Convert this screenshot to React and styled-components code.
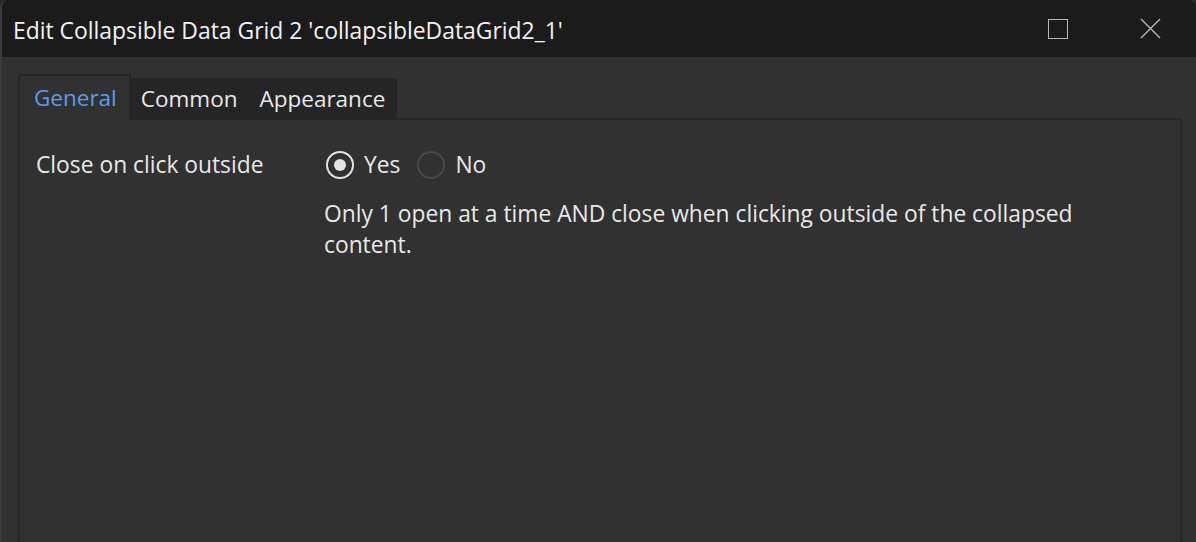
import React, { useState } from 'react';
import styled, { createGlobalStyle } from 'styled-components';

const GlobalStyle = createGlobalStyle`
  html, body {
    margin: 0;
    padding: 0;
    background: #2a2a2a;
    overflow: hidden;
  }
`;

const Window = styled.div`
  width: 1196px;
  height: 542px;
  box-sizing: border-box;
  display: flex;
  flex-direction: column;
  border-left: 2px solid #3c3c3c;
  border-radius: 8px 8px 0 0;
  overflow: hidden;
  font-family: 'Open Sans', 'Noto Sans', sans-serif;
  color: #e8e8e8;
`;

const TitleBar = styled.div`
  height: 57px;
  flex-shrink: 0;
  display: flex;
  align-items: center;
  background: #1b1b1b;
  padding-left: 11px;
`;

const Title = styled.div`
  flex: 1;
  font-size: 22.9px;
  color: #f2f2f2;
  padding-top: 4px;
`;

const WindowButton = styled.button`
  width: 92px;
  height: 57px;
  border: none;
  background: transparent;
  display: flex;
  align-items: center;
  justify-content: center;
  padding: 0;
  color: #b8b8b8;
`;

const Body = styled.div`
  flex: 1;
  display: flex;
  flex-direction: column;
  background: #313131;
  padding: 17px 14px 0 16px;
`;

const TabStrip = styled.div`
  display: flex;
  align-items: flex-end;
  position: relative;
  z-index: 1;
  margin-bottom: -2px;
`;

const Tab = styled.div`
  box-sizing: border-box;
  font-size: 22.5px;
  display: flex;
  align-items: center;
  ${(p) =>
    p.$active
      ? `
    height: 46px;
    padding: 0 12px 2px 14px;
    background: #313131;
    border: 2px solid #262626;
    border-bottom: none;
    color: #5e9be8;
  `
      : `
    height: 40px;
    margin-bottom: 2px;
    padding: 0 12px 0 10px;
    background: #252525;
    color: #e8e8e8;
  `}
`;

const Panel = styled.div`
  flex: 1;
  border: 2px solid #262626;
  border-bottom: none;
  padding: 29px 16px 0 16px;
`;

const Row = styled.div`
  display: grid;
  grid-template-columns: 290px 1fr;
  font-size: 22.8px;
`;

const Label = styled.div`
  line-height: 31px;
`;

const Options = styled.div`
  display: flex;
  flex-direction: column;
  gap: 18px;
`;

const RadioGroup = styled.div`
  display: flex;
  align-items: center;
  gap: 17px;
  height: 31px;
`;

const RadioOption = styled.label`
  display: flex;
  align-items: center;
  gap: 10px;
  cursor: pointer;
`;

const RadioCircle = styled.span`
  box-sizing: border-box;
  width: 28px;
  height: 28px;
  border-radius: 50%;
  border: 2px solid ${(p) => (p.$checked ? '#e4e4e4' : '#4a4a4a')};
  display: flex;
  align-items: center;
  justify-content: center;

  &::after {
    content: '';
    width: 12px;
    height: 12px;
    border-radius: 50%;
    background: #e4e4e4;
    display: ${(p) => (p.$checked ? 'block' : 'none')};
  }
`;

const Description = styled.div`
  line-height: 31px;
  max-width: 800px;
  margin-left: -2px;
`;

const App = () => {
  const [value, setValue] = useState('yes');

  return (
    <>
      <GlobalStyle />
      <Window>
        <TitleBar>
          <Title>Edit Collapsible Data Grid 2 'collapsibleDataGrid2_1'</Title>
          <WindowButton>
            <svg width="20" height="20" viewBox="0 0 20 20">
              <rect x="0.5" y="0.5" width="19" height="19" fill="none" stroke="currentColor" />
            </svg>
          </WindowButton>
          <WindowButton>
            <svg width="21" height="21" viewBox="0 0 21 21">
              <path d="M1 1 L20 20 M20 1 L1 20" stroke="currentColor" strokeWidth="1.4" />
            </svg>
          </WindowButton>
        </TitleBar>
        <Body>
          <TabStrip>
            <Tab $active>General</Tab>
            <Tab>Common</Tab>
            <Tab>Appearance</Tab>
          </TabStrip>
          <Panel>
            <Row>
              <Label>Close on click outside</Label>
              <Options>
                <RadioGroup>
                  <RadioOption onClick={() => setValue('yes')}>
                    <RadioCircle $checked={value === 'yes'} />
                    Yes
                  </RadioOption>
                  <RadioOption onClick={() => setValue('no')}>
                    <RadioCircle $checked={value === 'no'} />
                    No
                  </RadioOption>
                </RadioGroup>
                <Description>
                  Only 1 open at a time AND close when clicking outside of the collapsed content.
                </Description>
              </Options>
            </Row>
          </Panel>
        </Body>
      </Window>
    </>
  );
};

export default App;
